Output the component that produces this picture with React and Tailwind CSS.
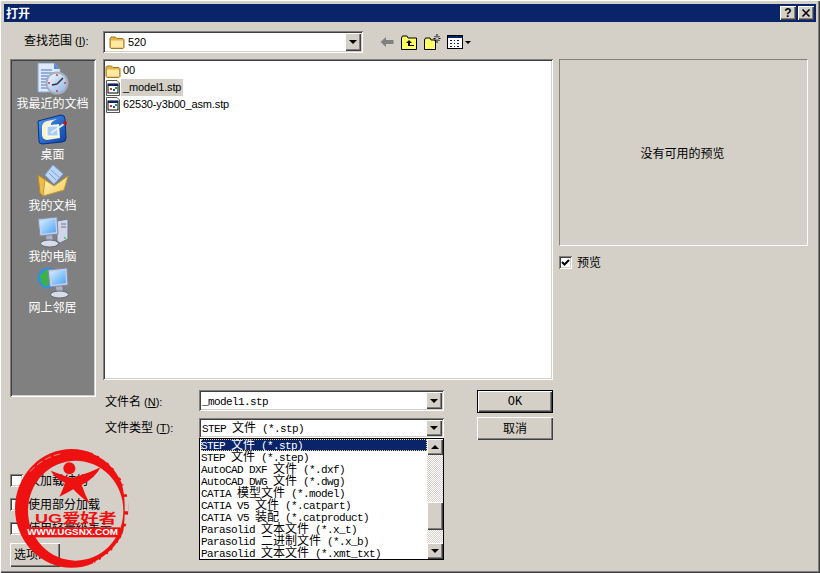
import React from 'react'

const sunken = 'shadow-[inset_1px_1px_0_#808080,inset_-1px_-1px_0_#ffffff,inset_2px_2px_0_#404040,inset_-2px_-2px_0_#d4d0c8]'
const raised = 'shadow-[inset_1px_1px_0_#ffffff,inset_-1px_-1px_0_#404040,inset_-2px_-2px_0_#808080]'
const cjk = "font-['Noto_Sans_CJK_SC',sans-serif]"
const tahoma = "font-['Liberation_Sans','Noto_Sans_CJK_SC',sans-serif] text-[11px] tracking-[-0.15px]"

// Dialog text mixes full-width hanzi with narrow fixed-width latin
const SimText = ({ text, className = '' }) => (
  <span className={`whitespace-pre leading-[12px] ${className}`}>
    {text.split(/([\u4e00-\u9fff]+)/).map((part, i) =>
      /[\u4e00-\u9fff]/.test(part) ? (
        <span key={i} className={`${cjk} text-[12px] leading-[12px]`}>{part}</span>
      ) : (
        <span key={i} className="font-['Liberation_Mono',monospace] text-[11px] leading-[12px] tracking-[-0.6px]">{part}</span>
      )
    )}
  </span>
)

// Field caption with its underlined access key
const FieldLabel = ({ text, accel, className = '' }) => (
  <div className={`whitespace-pre text-black ${className}`}>
    <span className={`${cjk} text-[12px]`}>{text}</span>
    <span className="font-['Liberation_Sans',sans-serif] text-[11px]"> (<span className="underline">{accel}</span>):</span>
  </div>
)

const DownArrow = () => <div className="h-0 w-0 border-x-[4px] border-t-[4px] border-x-transparent border-t-black" />
const UpArrow = () => <div className="h-0 w-0 border-x-[4px] border-b-[4px] border-x-transparent border-b-black" />

const FolderSmall = ({ className }) => (
  <svg viewBox="0 0 16 16" className={className}>
    <path d="M1 4.5 L2 3 H6.5 L8 4.5 H14 L15 5.5 V13.5 L14 14.5 H2 L1 13.5 Z" fill="#e8b23c" stroke="#9a7a2c" strokeWidth="1" />
    <path d="M2 6.5 H14 V13.5 H2 Z" fill="#ffe9a4" />
  </svg>
)

const StpFile = ({ className }) => (
  <svg viewBox="0 0 16 16" className={className}>
    <path d="M1.5 0.5 H12 L14.5 3 V15.5 H1.5 Z" fill="#fff" stroke="#555" />
    <rect x="3" y="4" width="10" height="9" fill="#fff" stroke="#000" />
    <rect x="3" y="4" width="10" height="2" fill="#0a246a" />
    <rect x="5" y="8" width="2" height="2" fill="#d03020" />
    <rect x="8" y="9" width="2" height="2" fill="#2050c0" />
    <rect x="10" y="7" width="2" height="2" fill="#20a040" />
  </svg>
)

const RecentIcon = () => (
  <svg viewBox="0 0 32 32" className="h-8 w-8">
    <defs>
      <linearGradient id="clockFace" x1="0" y1="0" x2="1" y2="1">
        <stop offset="0" stopColor="#f4f8ff" />
        <stop offset="1" stopColor="#8fb4e8" />
      </linearGradient>
    </defs>
    <path d="M1 0 H17 L23 6 V29 H1 Z" fill="#dfe9fb" stroke="#8ba6d8" />
    <path d="M17 0 V6 H23 Z" fill="#5e8ad8" />
    <path d="M4 7 H15 M4 10 H17 M4 13 H14 M4 16 H12 M4 19 H12 M4 22 H12 M4 25 H14" stroke="#7c9bd8" strokeWidth="1.4" />
    <circle cx="20" cy="20" r="11.5" fill="#a4afbe" />
    <circle cx="20" cy="20" r="9.5" fill="url(#clockFace)" />
    <path d="M20 21 L26 15 M20 21 L15 22" stroke="#333" strokeWidth="1.5" />
    <circle cx="20" cy="12" r="0.9" fill="#d03020" />
    <circle cx="28" cy="20" r="0.9" fill="#d03020" />
    <circle cx="12" cy="20" r="0.9" fill="#d03020" />
    <circle cx="20" cy="28" r="0.9" fill="#d03020" />
  </svg>
)

const DesktopIcon = () => (
  <svg viewBox="0 0 32 32" className="h-8 w-8">
    <defs>
      <linearGradient id="deskBlue" x1="0" y1="0" x2="1" y2="1">
        <stop offset="0" stopColor="#4a9cf6" />
        <stop offset="1" stopColor="#0a3fa8" />
      </linearGradient>
    </defs>
    <path d="M1 7 L24 1 Q28 1 28 5 L29 24 Q29 28 25 28 L5 30 Q2 30 2 27 Z" fill="url(#deskBlue)" stroke="#0b2f80" />
    <path d="M5 12 Q6 8 10 7 L20 5 Q13 8 14 11 L22 10 L23 24 L10 26 Q4 25 5 18 Z" fill="#fbf2cf" />
    <rect x="10" y="12" width="11" height="10" fill="#a9ccf6" stroke="#fff" />
    <path d="M14 19 L27 10" stroke="#e8eef8" strokeWidth="2" />
    <circle cx="28" cy="9" r="2" fill="#c01818" />
  </svg>
)

const DocsIcon = () => (
  <svg viewBox="0 0 32 32" className="h-8 w-8">
    <defs>
      <linearGradient id="docsFolder" x1="0" y1="0" x2="1" y2="1">
        <stop offset="0" stopColor="#fff6c4" />
        <stop offset="1" stopColor="#f6c850" />
      </linearGradient>
    </defs>
    <path d="M16 0 L26 9 L17 19 L8 10 Z" fill="#bcd6f8" stroke="#86aae0" />
    <path d="M14 5 L22 12 M12 8 L19 15" stroke="#7aa0dc" />
    <path d="M1 10 L3 28 L6 31 L10 16 Z" fill="#f0bc48" stroke="#b58a2a" />
    <path d="M8 15 L17 21 L31 11 L27 25 L6 31 Z" fill="url(#docsFolder)" stroke="#c09a3c" />
  </svg>
)

const Monitor = ({ id, x = 0 }) => (
  <g transform={`translate(${x} 0)`}>
    <defs>
      <linearGradient id={id} x1="0" y1="0" x2="1" y2="1">
        <stop offset="0" stopColor="#d8f0ff" />
        <stop offset="1" stopColor="#4aa2f4" />
      </linearGradient>
    </defs>
    <path d="M1 3 L20 1 L21 18 L3 20 Z" fill="#c4cfe6" stroke="#7e8bb0" />
    <path d="M3 5 L18 3 L19 16 L5 18 Z" fill={`url(#${id})`} />
    <path d="M9 20 L15 19 L16 25 L10 26 Z" fill="#aab2c8" />
    <ellipse cx="12.5" cy="27.5" rx="9" ry="3.5" fill="#d8dce8" stroke="#5c6478" />
  </g>
)

const ComputerIcon = () => (
  <svg viewBox="0 0 32 32" className="h-8 w-8">
    <path d="M20 5 L31 3 V23 L23 27 L20 25 Z" fill="#d0d6e6" stroke="#6c7692" />
    <path d="M24 8 H29 M24 11 H29" stroke="#6c7692" />
    <circle cx="28" cy="22" r="1" fill="#30d040" />
    <Monitor id="pcScreen" />
  </svg>
)

const NetworkIcon = () => (
  <svg viewBox="0 0 32 32" className="h-8 w-8">
    <circle cx="11" cy="11" r="10.5" fill="#2f8ee8" />
    <path d="M3 8 Q8 1 14 2 L17 7 L12 12 L13 17 L8 20 Q2 15 3 8 Z" fill="#3cb04c" />
    <Monitor id="netScreen" x="10" />
  </svg>
)

const places = [
  { label: '我最近的文档', icon: <RecentIcon /> },
  { label: '桌面', icon: <DesktopIcon /> },
  { label: '我的文档', icon: <DocsIcon /> },
  { label: '我的电脑', icon: <ComputerIcon /> },
  { label: '网上邻居', icon: <NetworkIcon /> },
]

const fileTypes = [
  'STEP 文件 (*.step)',
  'AutoCAD DXF 文件 (*.dxf)',
  'AutoCAD DWG 文件 (*.dwg)',
  'CATIA 模型文件 (*.model)',
  'CATIA V5 文件 (*.catpart)',
  'CATIA V5 装配 (*.catproduct)',
  'Parasolid 文本文件 (*.x_t)',
  'Parasolid 二进制文件 (*.x_b)',
  'Parasolid 文本文件 (*.xmt_txt)',
]

const Checkbox = ({ checked, label, labelClass = '' }) => (
  <div className="flex h-[13px] items-center whitespace-nowrap">
    <div className={`flex h-[13px] w-[13px] shrink-0 items-center justify-center bg-white ${sunken}`}>
      {checked && (
        <svg viewBox="0 0 9 9" className="h-[9px] w-[9px]">
          <path d="M1 4 L3.5 6.5 L8 2" fill="none" stroke="#000" strokeWidth="2" />
        </svg>
      )}
    </div>
    <span className={`${cjk} ml-[5px] -translate-y-[1px] text-[12px] leading-[13px] text-black ${labelClass}`}>{label}</span>
  </div>
)

const ComboBox = ({ className = '', children }) => (
  <div className={`relative flex items-center bg-white p-[2px] ${sunken} ${className}`}>
    <div className="flex min-w-0 flex-1 items-center whitespace-nowrap pl-[1px] text-black">{children}</div>
    <div className={`flex h-full w-[16px] shrink-0 items-center justify-center bg-[#d4d0c8] ${raised}`}>
      <DownArrow />
    </div>
  </div>
)

const FileTypeList = () => (
  <div className="absolute left-0 top-full z-10 flex h-[122px] w-full border border-black bg-white">
    <div className="flex-1 overflow-hidden pl-[1px] text-black">
      <div className="flex h-[12px] items-center bg-[#0a246a] text-white outline-1 -outline-offset-1 outline-dotted outline-[#f0d080]">
        <SimText text="STEP 文件 (*.stp)" className="-translate-y-[1px]" />
      </div>
      {fileTypes.map((t) => (
        <div key={t} className="flex h-[12px] items-center">
          <SimText text={t} className="-translate-y-[1px]" />
        </div>
      ))}
    </div>
    <div className="flex w-[16px] shrink-0 flex-col bg-[repeating-conic-gradient(#d4d0c8_0_25%,#ffffff_0_50%)] bg-[length:2px_2px]">
      <div className={`flex h-[16px] items-center justify-center bg-[#d4d0c8] ${raised}`}>
        <UpArrow />
      </div>
      <div className={`mt-[47px] h-[28px] bg-[#d4d0c8] ${raised}`} />
      <div className={`mt-auto flex h-[16px] items-center justify-center bg-[#d4d0c8] ${raised}`}>
        <DownArrow />
      </div>
    </div>
  </div>
)

// Stamp that sits over the lower left corner of the dialog
const Watermark = () => (
  <svg viewBox="0 0 375 399" className="pointer-events-none absolute left-[10px] top-[440px] z-20 h-[133px] w-[125px]">
    <path
      fillRule="evenodd"
      fill="#ee1111"
      d="M15 205 A170 178 0 1 1 355 205 A170 178 0 1 1 15 205 Z M54 212 A143 150 0 1 0 340 212 A143 150 0 1 0 54 212 Z"
    />
    <path d="M250 40 Q320 70 345 150" fill="none" stroke="#d4d0c8" strokeWidth="5" strokeDasharray="14 6 30 9" />
    <path d="M342 135 Q356 190 345 280" fill="none" stroke="#d4d0c8" strokeWidth="11" strokeDasharray="28 8 44 10" />
    <path d="M345 270 Q320 335 250 370" fill="none" stroke="#d4d0c8" strokeWidth="6" strokeDasharray="22 7 12 5" />
    <path d="M60 95 Q100 50 160 40" fill="none" stroke="#d4d0c8" strokeWidth="2" strokeDasharray="20 9" />
    <circle cx="178" cy="85" r="18" fill="#ee1111" />
    <path d="M122 92 L165 108 Q185 118 205 108 Q240 98 272 82 Q255 115 215 135 Q225 165 240 192 Q205 165 190 148 Q170 160 148 170 Q160 145 165 128 Q135 115 122 92 Z" fill="#ee1111" />
    <rect x="45" y="262" width="285" height="30" fill="#ee1111" />
    <text x="75" y="250" fontFamily="'Liberation Sans','Noto Sans CJK SC',sans-serif" fontWeight="700" fontSize="40" fill="#ee1111" textLength="245" lengthAdjust="spacingAndGlyphs">UG爱好者</text>
    <text x="52" y="286" fontFamily="'Liberation Sans',sans-serif" fontWeight="700" fontSize="29" fill="#ffffff" textLength="272" lengthAdjust="spacingAndGlyphs">WWW.UGSNX.COM</text>
  </svg>
)

export default function App() {
  return (
    <div className={`relative flex h-[573px] w-[820px] flex-col overflow-hidden bg-[#d4d0c8] p-[4px] ${raised}`}>
      {/* title bar */}
      <div className="flex h-[18px] shrink-0 items-center bg-[#0a246a] pl-[2px] pr-[2px]">
        <span className={`${cjk} text-[12px] font-bold text-white`}>打开</span>
        <div className={`ml-auto flex h-[14px] w-[16px] items-center justify-center bg-[#d4d0c8] ${raised}`}>
          <span className="font-['Liberation_Sans',sans-serif] text-[12px] font-bold leading-none text-black">?</span>
        </div>
        <div className={`ml-[2px] flex h-[14px] w-[16px] items-center justify-center bg-[#d4d0c8] ${raised}`}>
          <svg viewBox="0 0 10 10" className="h-[10px] w-[10px]">
            <path d="M1.5 1.5 L8.5 8.5 M8.5 1.5 L1.5 8.5" stroke="#000" strokeWidth="1.6" />
          </svg>
        </div>
      </div>

      <div className="flex flex-1 flex-col px-[6px]">
        {/* look-in row */}
        <div className="mt-[9px] flex h-[22px] items-center">
          <FieldLabel text="查找范围" accel="I" className="w-[93px] -translate-y-[3px] pl-[14px]" />
          <ComboBox className="h-[22px] w-[260px]">
            <FolderSmall className="ml-[3px] h-4 w-4" />
            <span className={`${tahoma} ml-[3px]`}>520</span>
          </ComboBox>
          <svg viewBox="0 0 14 12" className="ml-[17px] h-[12px] w-[14px]">
            <path d="M0.5 6 L6 1 V4 H13.5 V8 H6 V11 Z" fill="#808080" />
          </svg>
          <svg viewBox="0 0 16 15" className="ml-[7px] h-[15px] w-[16px]">
            <path d="M0.5 3 L1.5 1 H6 L7 3 H15.5 V14.5 H0.5 Z" fill="#ffff66" stroke="#000" />
            <path d="M8 5 L5 8 H7 V11 H13 V10 H9 V8 H11 Z" fill="#000" />
          </svg>
          <svg viewBox="0 0 17 16" className="ml-[7px] h-[16px] w-[17px]">
            <path d="M0.5 6 L1.5 4 H6 L7 6 H11.5 V15.5 H0.5 Z" fill="#ffff66" stroke="#000" />
            <path d="M13 0 V3 M13 6 V9 M9.5 4.5 H11.5 M14.5 4.5 H16.5 M10.5 2 L12 3.5 M15.5 2 L14 3.5 M10.5 7 L12 5.5 M15.5 7 L14 5.5" stroke="#000" />
          </svg>
          <svg viewBox="0 0 16 14" className="ml-[6px] h-[14px] w-[16px]">
            <rect x="0.5" y="0.5" width="15" height="13" fill="#fff" stroke="#000" />
            <rect x="1" y="1" width="14" height="2" fill="#0a246a" />
            <path d="M3 5 h2 v1 h-2 Z M7 5 h1 v1 h-1 Z M10 5 h2 v1 h-2 Z M3 8 h2 v1 h-2 Z M7 8 h1 v1 h-1 Z M10 8 h2 v1 h-2 Z M3 11 h2 v1 h-2 Z M7 11 h1 v1 h-1 Z M10 11 h2 v1 h-2 Z" fill="#0a246a" />
          </svg>
          <div className="ml-[2px] h-0 w-0 border-x-[3px] border-t-[3px] border-x-transparent border-t-black" />
        </div>

        <div className="mt-[6px] flex">
          {/* places bar and load options */}
          <div className="w-[86px] shrink-0">
            <div className={`flex h-[338px] flex-col items-center bg-[#808080] pt-[4px] ${sunken}`}>
              {places.map((p) => (
                <div key={p.label} className="flex h-[51px] w-full flex-col items-center pr-[1px]">
                  {p.icon}
                  <span className={`${cjk} mt-[1px] whitespace-nowrap text-[12px] leading-[14px] text-white`}>{p.label}</span>
                </div>
              ))}
            </div>
            <div className="mt-[77px] flex flex-col gap-[11px]">
              <Checkbox label="仅加载结构" />
              <Checkbox label="使用部分加载" />
              <Checkbox label="使用轻量级表示" />
            </div>
            <div className={`mt-[8px] flex h-[24px] w-[50px] items-center bg-[#d4d0c8] pb-[2px] pl-[4px] ${raised}`}>
              <span className={`${cjk} whitespace-nowrap text-[12px] text-black`}>选项...</span>
            </div>
          </div>

          <div className="ml-[7px] flex w-[450px] shrink-0 flex-col">
            {/* file list */}
            <div className={`h-[321px] bg-white pl-[2px] pt-[3px] ${sunken}`}>
              <div className="flex h-[17px] items-center">
                <FolderSmall className="h-4 w-4" />
                <span className={`${tahoma} ml-[1px] px-[1px] text-black`}>00</span>
              </div>
              <div className="flex h-[17px] items-center">
                <StpFile className="h-4 w-4" />
                <span className={`${tahoma} bg-[#d4d0c8] px-[2px] leading-[17px] text-black`}>_model1.stp</span>
              </div>
              <div className="flex h-[17px] items-center">
                <StpFile className="h-4 w-4" />
                <span className={`${tahoma} ml-[1px] px-[1px] text-black`}>62530-y3b00_asm.stp</span>
              </div>
            </div>

            <div className="mt-[10px] flex">
              <div className="flex flex-col gap-[7px]">
                <div className="flex h-[21px] items-center">
                  <FieldLabel text="文件名" accel="N" className="w-[96px] -translate-y-[1px] pl-[2px]" />
                  <ComboBox className="h-[21px] w-[245px]">
                    <SimText text="_model1.stp" />
                  </ComboBox>
                </div>
                <div className="flex h-[20px] items-center">
                  <FieldLabel text="文件类型" accel="T" className="w-[96px] -translate-y-[2px] pl-[2px]" />
                  <ComboBox className="h-[20px] w-[245px]">
                    <SimText text="STEP 文件 (*.stp)" className="-translate-y-[1px]" />
                    <FileTypeList />
                  </ComboBox>
                </div>
              </div>
              <div className="ml-auto flex w-[76px] flex-col gap-[4px]">
                <div className="h-[23px] border border-black">
                  <div className={`flex h-full items-center justify-center bg-[#d4d0c8] ${raised}`}>
                    <span className="font-['Liberation_Mono',monospace] text-[12px] text-black">OK</span>
                  </div>
                </div>
                <div className={`flex h-[23px] items-center justify-center bg-[#d4d0c8] pb-[1px] ${raised}`}>
                  <span className={`${cjk} text-[12px] text-black`}>取消</span>
                </div>
              </div>
            </div>
          </div>

          {/* preview pane */}
          <div className="ml-[6px] w-[249px] shrink-0">
            <div className="flex h-[187px] items-center justify-center border border-b-white border-l-[#808080] border-r-white border-t-[#808080] pr-[2px]">
              <span className={`${cjk} text-[12px] text-black`}>没有可用的预览</span>
            </div>
            <div className="mt-[10px]">
              <Checkbox checked label="预览" />
            </div>
          </div>
        </div>
      </div>

      <Watermark />
    </div>
  )
}
